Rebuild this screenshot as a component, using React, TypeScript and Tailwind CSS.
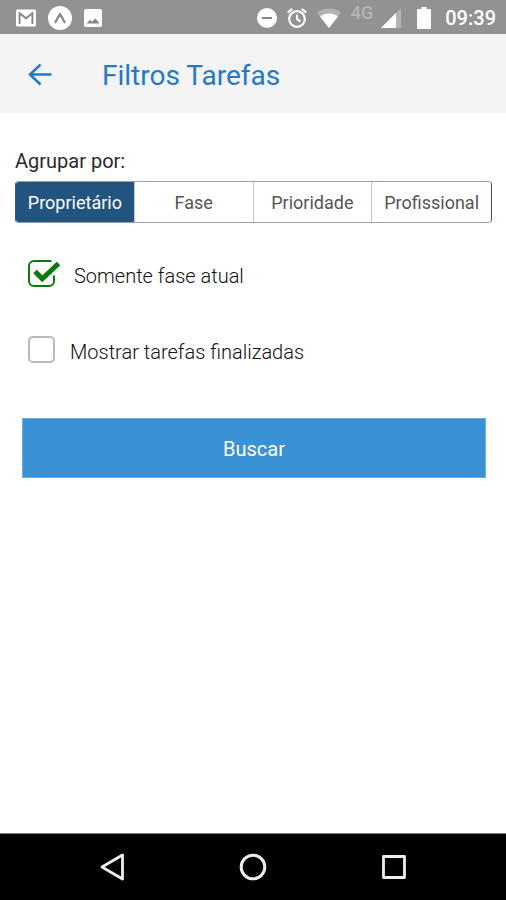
import React, { useState } from "react";

type CheckOptionProps = {
  label: string;
  checked: boolean;
  onChange: (checked: boolean) => void;
};

const GROUPS = ["Proprietário", "Fase", "Prioridade", "Profissional"];

function StatusBar() {
  return (
    <div className="flex h-[34px] shrink-0 items-center justify-between bg-[#929292] pt-0.5 pr-2.5 pl-4 text-white">
      <div className="flex items-center gap-3">
        <svg className="h-[18px] w-5" viewBox="0 0 20 18" aria-hidden>
          <rect width="20" height="17" y="0.5" rx="1.5" fill="currentColor" />
          <path
            d="M3.6 15V4.2L10 9.2l6.4-5V15"
            fill="none"
            stroke="#858585"
            strokeWidth="1.9"
          />
        </svg>
        <svg className="size-6" viewBox="0 0 24 24" aria-hidden>
          <circle cx="12" cy="12" r="12" fill="currentColor" />
          <path
            d="M7.4 16.2c1.6-2.2 3-6 4.6-8.4 1.6 2.4 3 6.2 4.6 8.4"
            fill="none"
            stroke="#858585"
            strokeWidth="2.2"
            strokeLinecap="round"
            strokeLinejoin="round"
          />
        </svg>
        <svg className="size-[18px]" viewBox="0 0 18 18" aria-hidden>
          <rect width="18" height="18" rx="2" fill="currentColor" />
          <path d="M2.5 14.5L5.800 11l2.300 1.800L11.500 9.500l4 5z" fill="#858585" />
        </svg>
      </div>

      <div className="flex items-center">
        <svg className="size-5" viewBox="0 0 20 20" aria-hidden>
          <circle cx="10" cy="10" r="10" fill="currentColor" />
          <path d="M5 10h10" stroke="#858585" strokeWidth="2" />
        </svg>
        <svg
          className="ml-2.5 size-5"
          viewBox="0 0 20 20"
          fill="none"
          stroke="currentColor"
          strokeWidth="2.2"
          aria-hidden
        >
          <circle cx="10" cy="11" r="7.8" />
          <path d="M10 6.5V11l3.400 2.500M.8 4.600l4.400-3.700M19.200 4.600l-4.400-3.700" />
        </svg>
        <svg className="ml-2.5 h-5 w-6" viewBox="0 0 24 20" fill="currentColor" aria-hidden>
          <path d="M12 20L0 4.500C3 2 7.300.5 12 .5S21 2 24 4.500z" opacity=".3" />
          <path d="M12 20L3 8.500C5.300 6.600 8.500 5.500 12 5.500s6.700 1.100 9 3z" />
        </svg>
        <span className="mb-2.5 ml-2.5 text-lg leading-5 font-medium text-[#b5b5b5]">4G</span>
        <svg className="ml-2 size-5" viewBox="0 0 20 20" fill="currentColor" aria-hidden>
          <path d="M0 20L20 0v20z" opacity=".3" />
          <path d="M0 20L15 5v15z" />
        </svg>
        <svg className="ml-4 h-[22px] w-3.5" viewBox="0 0 14 22" fill="currentColor" aria-hidden>
          <path d="M4.500 0h5v2H13a1 1 0 011 1v18a1 1 0 01-1 1H1a1 1 0 01-1-1V3a1 1 0 011-1h3.500z" />
        </svg>
        <span className="ml-3.5 text-xl font-medium">09:39</span>
      </div>
    </div>
  );
}

function CheckOption({ label, checked, onChange }: CheckOptionProps) {
  return (
    <label
      className={`flex h-8 items-center text-xl font-light text-[#111] ${checked ? "gap-3.5" : "gap-2.5"}`}
    >
      <span className="relative flex shrink-0">
        <input
          type="checkbox"
          checked={checked}
          onChange={(e) => onChange(e.target.checked)}
          className="h-7 w-8 appearance-none"
        />
        <svg
          className="pointer-events-none absolute inset-0 h-7 w-8"
          viewBox="0 0 32 28"
          fill="none"
          aria-hidden
        >
          {checked ? (
            <>
              <path
                d="M23.500 1H6a5 5 0 00-5 5v15a5 5 0 005 5h15a5 5 0 005-5v-5.500"
                stroke="#087a10"
                strokeWidth="2"
              />
              <path
                d="M7 11.500l7.300 7.200L30.500 3.500"
                stroke="#087a10"
                strokeWidth="5"
              />
            </>
          ) : (
            <rect x="1" y="1" width="25" height="25" rx="4" stroke="#b9b9b9" strokeWidth="2" />
          )}
        </svg>
      </span>
      <span className="pt-1">{label}</span>
    </label>
  );
}

function NavigationBar() {
  return (
    <nav className="flex h-[67px] shrink-0 items-center justify-center gap-[115px] border-t border-[#777] bg-black text-[#eee]">
      <button type="button" aria-label="Voltar">
        <svg className="h-7 w-6" viewBox="0 0 24 28" fill="none" stroke="currentColor" strokeWidth="2.800" strokeLinejoin="round">
          <path d="M22.500 2v24L2 14z" />
        </svg>
      </button>
      <button type="button" aria-label="Início">
        <svg className="size-7" viewBox="0 0 28 28" fill="none" stroke="currentColor" strokeWidth="3">
          <circle cx="14" cy="14" r="11.800" />
        </svg>
      </button>
      <button type="button" aria-label="Recentes">
        <svg className="size-6" viewBox="0 0 24 24" fill="none" stroke="currentColor" strokeWidth="2.800" strokeLinejoin="round">
          <path d="M1.500 1.500h21v21h-21z" />
        </svg>
      </button>
    </nav>
  );
}

export default function App() {
  const [group, setGroup] = useState(GROUPS[0]);
  const [onlyCurrent, setOnlyCurrent] = useState(true);
  const [showFinished, setShowFinished] = useState(false);

  return (
    <div className="flex min-h-screen flex-col bg-white font-[Roboto,sans-serif]">
      <StatusBar />

      <header className="flex h-[79px] shrink-0 items-center gap-[50px] bg-[#f4f4f4] pt-1 pl-7 text-[#2378c8]">
        <button type="button" aria-label="Voltar">
          <svg
            className="size-6"
            viewBox="0 0 24 24"
            fill="none"
            stroke="currentColor"
            strokeWidth="2.500"
          >
            <path d="M12.500.5L2 10.500l10.500 10M2 10.500H23.500" />
          </svg>
        </button>
        <h1 className="text-[28px]">Filtros Tarefas</h1>
      </header>

      <main className="flex flex-1 flex-col pt-9">
        <section className="pr-3.5 pl-[15px]">
          <h2 id="group-label" className="text-xl leading-6 text-[#2b2b2b]">
            Agrupar por:
          </h2>
          <div
            role="group"
            aria-labelledby="group-label"
            className="mt-2 grid h-[42px] grid-cols-4 divide-x divide-[#c4c4d2] overflow-hidden rounded border border-x-[#34558a] border-y-[#9a9ab0]"
          >
            {GROUPS.map((name) => (
              <button
                key={name}
                type="button"
                aria-pressed={group === name}
                onClick={() => setGroup(name)}
                className={
                  group === name
                    ? "bg-[#215580] pt-0.5 text-lg text-white"
                    : "bg-white pt-0.5 text-lg text-[#555]"
                }
              >
                {name}
              </button>
            ))}
          </div>
        </section>

        <div className="mt-[35px] flex flex-col gap-11 pl-7">
          <CheckOption
            label="Somente fase atual"
            checked={onlyCurrent}
            onChange={setOnlyCurrent}
          />
          <CheckOption
            label="Mostrar tarefas finalizadas"
            checked={showFinished}
            onChange={setShowFinished}
          />
        </div>

        <button
          type="button"
          className="mt-[52px] mr-5 ml-[22px] h-[60px] border border-[#6aaee2] bg-[#3a92d5] pt-0.5 text-xl text-white"
        >
          Buscar
        </button>
      </main>

      <NavigationBar />
    </div>
  );
}
